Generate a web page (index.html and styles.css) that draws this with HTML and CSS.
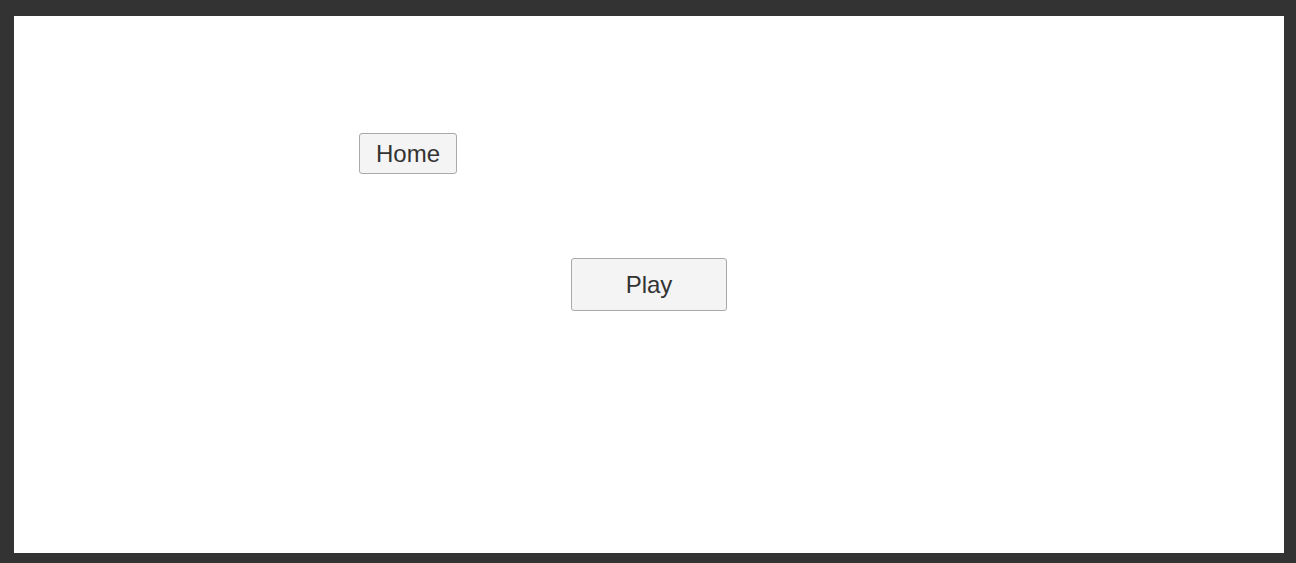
FILE: index.html
```html
<!DOCTYPE html>
<html>
<head>
<meta charset="utf-8">
<link rel="stylesheet" href="styles.css">
</head>
<body>
<main class="stage">
  <div class="top-row"><button class="btn btn-home">Home</button></div>
  <div class="center-row"><button class="btn btn-play">Play</button></div>
</main>
</body>
</html>
```
FILE: styles.css
```css
html, body { margin: 0; padding: 0; }
body {
  background: #333333;
  padding: 16px 12px 10px 14px;
  height: 563px;
  box-sizing: border-box;
  font-family: "Liberation Sans", Arial, sans-serif;
}
.stage {
  background: #ffffff;
  height: 537px;
  display: flex;
  flex-direction: column;
}
.top-row {
  padding: 117px 0 0 345px;
  display: flex;
}
.center-row {
  display: flex;
  justify-content: center;
  margin-top: 84px;
}
.btn {
  font-family: "Liberation Sans", Arial, sans-serif;
  font-size: 24px;
  color: #333333;
  background: #f4f4f4;
  border: 1px solid #a9a9a9;
  border-radius: 3px;
  padding: 0;
  box-sizing: border-box;
  display: flex;
  align-items: center;
  justify-content: center;
}
.btn-home { width: 98px; height: 41px; }
.btn-play { width: 156px; height: 53px; }
```
